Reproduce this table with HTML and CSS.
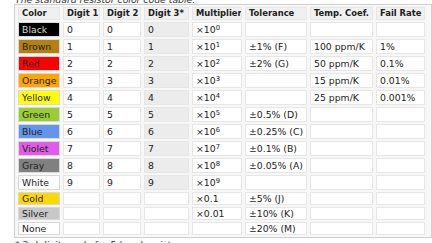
FILE: index.html
```html
<!DOCTYPE html>
<html>
<head>
<meta charset="utf-8">
<link rel="stylesheet" href="styles.css">
</head>
<body>
<div class="page">
  <div class="caption">The standard resistor color code table.</div>
  <table class="codes">
    <colgroup>
      <col class="c-color"><col class="c-d1"><col class="c-d2"><col class="c-d3"><col class="c-mult"><col class="c-tol"><col class="c-temp"><col class="c-fail">
    </colgroup>
    <thead>
      <tr><th>Color</th><th>Digit 1</th><th>Digit 2</th><th>Digit 3*</th><th>Multiplier</th><th>Tolerance</th><th>Temp. Coef.</th><th>Fail Rate</th></tr>
    </thead>
    <tbody>
      <tr class="tall"><td class="sw black">Black</td><td>0</td><td>0</td><td class="d3">0</td><td>×10<sup>0</sup></td><td></td><td></td><td></td></tr>
      <tr class="tall"><td class="sw brown">Brown</td><td>1</td><td>1</td><td class="d3">1</td><td>×10<sup>1</sup></td><td>±1% (F)</td><td>100 ppm/K</td><td>1%</td></tr>
      <tr class="tall"><td class="sw red">Red</td><td>2</td><td>2</td><td class="d3">2</td><td>×10<sup>2</sup></td><td>±2% (G)</td><td>50 ppm/K</td><td>0.1%</td></tr>
      <tr class="tall"><td class="sw orange">Orange</td><td>3</td><td>3</td><td class="d3">3</td><td>×10<sup>3</sup></td><td></td><td>15 ppm/K</td><td>0.01%</td></tr>
      <tr class="tall"><td class="sw yellow">Yellow</td><td>4</td><td>4</td><td class="d3">4</td><td>×10<sup>4</sup></td><td></td><td>25 ppm/K</td><td>0.001%</td></tr>
      <tr class="tall"><td class="sw green">Green</td><td>5</td><td>5</td><td class="d3">5</td><td>×10<sup>5</sup></td><td>±0.5% (D)</td><td></td><td></td></tr>
      <tr class="tall"><td class="sw blue">Blue</td><td>6</td><td>6</td><td class="d3">6</td><td>×10<sup>6</sup></td><td>±0.25% (C)</td><td></td><td></td></tr>
      <tr class="tall"><td class="sw violet">Violet</td><td>7</td><td>7</td><td class="d3">7</td><td>×10<sup>7</sup></td><td>±0.1% (B)</td><td></td><td></td></tr>
      <tr class="tall"><td class="sw gray">Gray</td><td>8</td><td>8</td><td class="d3">8</td><td>×10<sup>8</sup></td><td>±0.05% (A)</td><td></td><td></td></tr>
      <tr class="tall"><td class="sw white">White</td><td>9</td><td>9</td><td class="d3">9</td><td>×10<sup>9</sup></td><td></td><td></td><td></td></tr>
      <tr><td class="sw gold">Gold</td><td></td><td></td><td></td><td>×0.1</td><td>±5% (J)</td><td></td><td></td></tr>
      <tr><td class="sw silver">Silver</td><td></td><td></td><td></td><td>×0.01</td><td>±10% (K)</td><td></td><td></td></tr>
      <tr><td class="sw none">None</td><td></td><td></td><td></td><td></td><td>±20% (M)</td><td></td><td></td></tr>
    </tbody>
  </table>
  <div class="note">* 3rd digit – only for 5-band resistors</div>
</div>
</body>
</html>
```
FILE: styles.css
```css
html, body {
  margin: 0;
  padding: 0;
  background: #ffffff;
}
body {
  font-family: "DejaVu Sans", Verdana, sans-serif;
  font-size: 9.3px;
  color: #222222;
  overflow: hidden;
}
.page {
  margin-top: -4px;
  padding-left: 14px;
}
.caption {
  font-style: italic;
  line-height: 8px;
  padding-left: 1px;
  color: #333333;
}
.codes {
  border: 1px solid #cfcfcf;
  background: #f7f7f7;
  border-collapse: separate;
  border-spacing: 3px 2px;
  padding: 0 3px 0 0;
  table-layout: fixed;
  width: 416px;
  font-size: 9.3px;
}
.c-color { width: 42px; }
.c-d1 { width: 37px; }
.c-d2 { width: 38px; }
.c-d3 { width: 45px; }
.c-mult { width: 50px; }
.c-tol { width: 62px; }
.c-temp { width: 63px; }
.c-fail { width: 49px; }
.codes th,
.codes td {
  border: 1px solid #e6e6e6;
  padding: 0 3px;
  line-height: 11px;
  height: 11px;
  text-align: left;
  white-space: nowrap;
  overflow: hidden;
}
.codes th {
  background: #f0f0f0;
  font-weight: bold;
  font-size: 8.4px;
  color: #202020;
}
.codes td {
  background: #ffffff;
}
.codes tr.tall td {
  height: 13px;
}
.codes sup {
  font-size: 6.8px;
  line-height: 0;
  vertical-align: 3px;
}
.codes td.d3 { background: #ececec; }
.codes td.sw { border-color: #d8d8d8; }
.black { background: #000000 !important; color: #d8d8d8; }
.brown { background: #b5800f !important; }
.red { background: #ff0000 !important; }
.orange { background: #ffa500 !important; }
.yellow { background: #ffff00 !important; }
.green { background: #9acd32 !important; }
.blue { background: #6495ed !important; }
.violet { background: #e05ce6 !important; }
.gray { background: #808080 !important; }
.white { background: #ffffff !important; }
.gold { background: #ffd700 !important; }
.silver { background: #c8c8c8 !important; }
.none { background: #ffffff !important; }
.note {
  padding-left: 1px;
  line-height: 11px;
  margin-top: 1px;
  color: #333333;
}
```
